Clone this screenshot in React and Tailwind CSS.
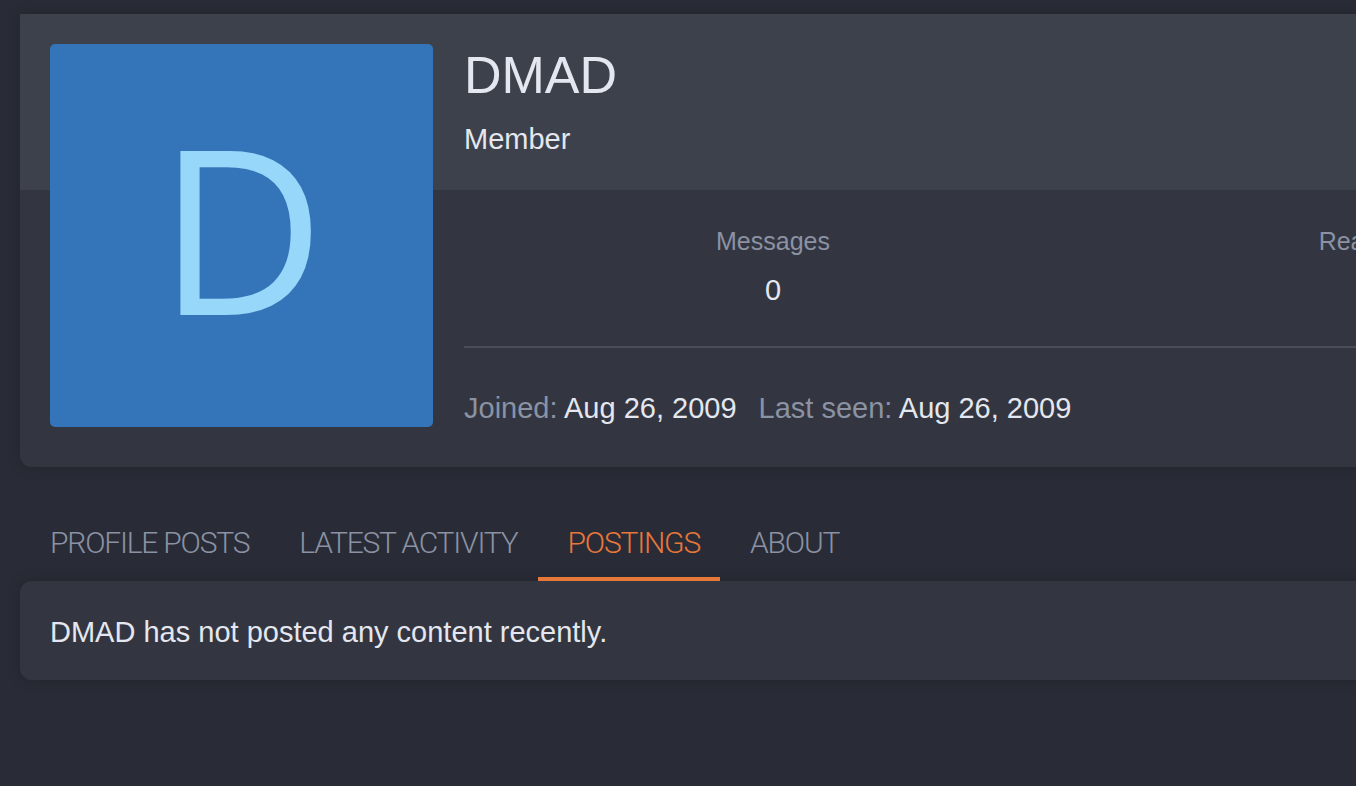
export default function App() {
  const tabs = [
    { label: "PROFILE POSTS", active: false },
    { label: "LATEST ACTIVITY", active: false },
    { label: "POSTINGS", active: true },
    { label: "ABOUT", active: false },
  ];
  return (
    <div className="w-[1356px] h-[786px] overflow-hidden bg-[#292c36] font-['Liberation_Sans',Arial,sans-serif]">
      <div className="pl-[20px] pt-[14px]">
        <div className="w-[1420px] flex rounded-b-[12px] bg-[linear-gradient(to_bottom,#3d414b_176px,#333640_176px)] shadow-[0_0_14px_rgba(0,0,0,0.18)]">
          <div className="pl-[30px] pt-[30px] pr-[31px]">
            <div className="w-[383px] h-[383px] rounded-[5px] bg-[#3474b8] flex items-center justify-center pb-[20px]">
              <span className="font-['Open_Sans',sans-serif] text-[230px] leading-none text-[#97d7fa]">D</span>
            </div>
          </div>
          <div className="flex-1 flex flex-col">
            <div className="h-[176px] pt-[30px]">
              <h1 className="text-[52px] leading-[1.2] text-[#e4e7ef]">DMAD</h1>
              <div className="mt-[16px] text-[29px] leading-[35px] text-[#e4e7ef]">Member</div>
            </div>
            <div className="pt-[36px] pb-[41px]">
              <div className="grid grid-cols-[618px_640px_618px] text-center">
                <div>
                  <div className="text-[25px] leading-[30px] text-[#8a92a4]">Messages</div>
                  <div className="mt-[17px] text-[29px] leading-[35px] text-[#e4e7ef]">0</div>
                </div>
                <div>
                  <div className="text-[25px] leading-[30px] text-[#8a92a4]">Reaction score</div>
                  <div className="mt-[17px] text-[29px] leading-[35px] text-[#e4e7ef]">0</div>
                </div>
                <div>
                  <div className="text-[25px] leading-[30px] text-[#8a92a4]">Points</div>
                  <div className="mt-[17px] text-[29px] leading-[35px] text-[#e4e7ef]">0</div>
                </div>
              </div>
              <div className="mt-[38px] h-[2px] bg-[#494d57]" />
              <div className="mt-[43px] flex gap-[22px] text-[29px] leading-[35px]">
                <span>
                  <span className="text-[#8a92a4]">Joined: </span>
                  <span className="text-[#e4e7ef]">Aug 26, 2009</span>
                </span>
                <span>
                  <span className="text-[#8a92a4]">Last seen: </span>
                  <span className="text-[#e4e7ef]">Aug 26, 2009</span>
                </span>
              </div>
            </div>
          </div>
        </div>

        <div className="mt-[58px] flex">
          {tabs.map((t) => (
            <div
              key={t.label}
              className={
                t.active
                  ? "pl-[30px] pr-[20px] pb-[16px] border-b-4 border-[#e8773a] text-[#e8773a] font-['Roboto',sans-serif] font-light text-[30px] leading-[36px] tracking-[-1.2px] whitespace-nowrap"
                  : "pl-[30px] pr-[20px] pb-[16px] border-b-4 border-transparent text-[#8a92a4] font-['Roboto',sans-serif] font-light text-[30px] leading-[36px] tracking-[-1.2px] whitespace-nowrap"
              }
            >
              {t.label}
            </div>
          ))}
        </div>

        <div className="w-[1420px] rounded-[12px] bg-[#333640] px-[30px] pt-[34px] pb-[30px] shadow-[0_0_14px_rgba(0,0,0,0.18)]">
          <p className="text-[29px] leading-[35px] text-[#e4e7ef]">DMAD has not posted any content recently.</p>
        </div>
      </div>
    </div>
  );
}
